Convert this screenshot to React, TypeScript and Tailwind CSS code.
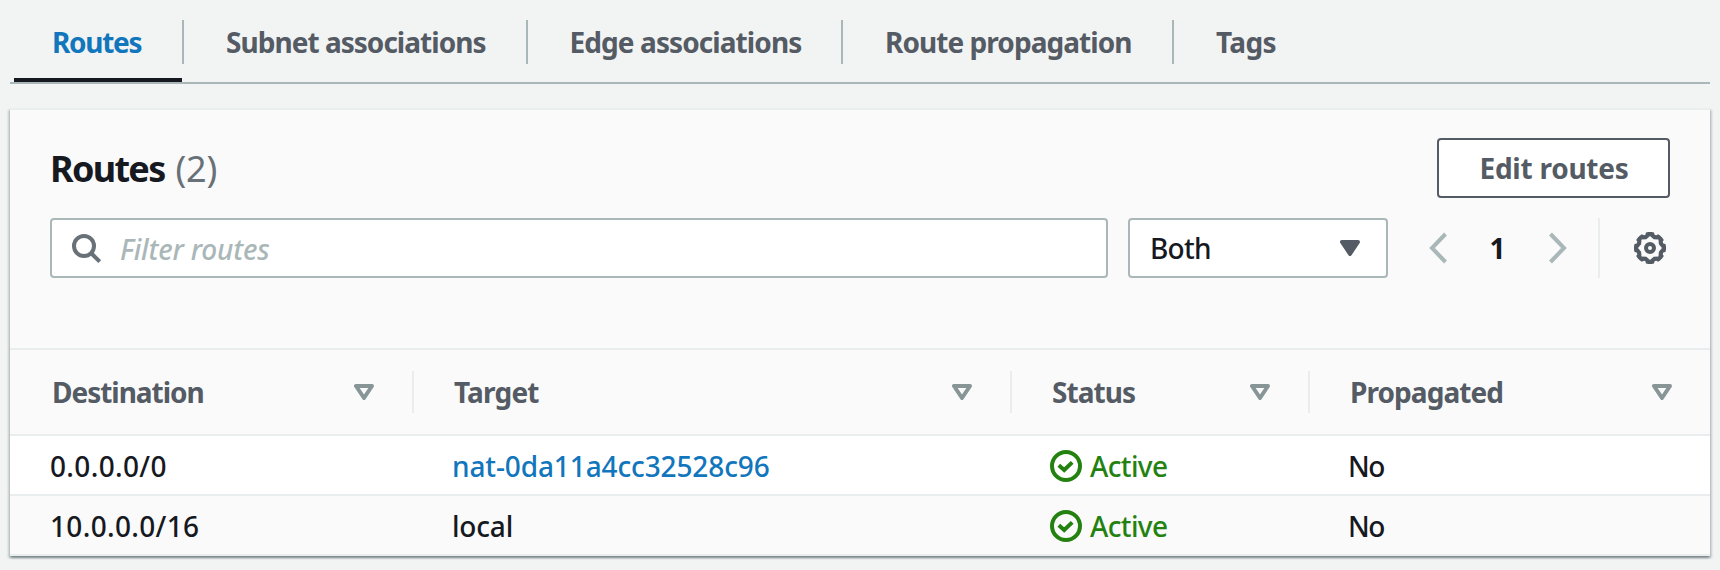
import React from "react";

const tabs = [
  { label: "Routes", box: "w-[168px] pl-[38px]", text: "text-[#1176bc] tracking-[-1.29px]" },
  { label: "Subnet associations", box: "w-[344px] border-r-2 pl-[42px]", text: "text-[#545b64] tracking-[-0.97px]" },
  { label: "Edge associations", box: "w-[315px] border-r-2 pl-[41.5px]", text: "text-[#545b64] tracking-[-0.91px]" },
  { label: "Route propagation", box: "w-[331px] border-r-2 pl-[42px]", text: "text-[#545b64] tracking-[-0.94px]" },
  { label: "Tags", box: "pl-[42px]", text: "text-[#545b64] tracking-[-0.63px]" },
];

const columns = [
  { label: "Destination", cls: "pl-[42px] pr-[38px]", text: "tracking-[-1.02px]" },
  { label: "Target", cls: "pl-10 pr-[38px]", text: "tracking-[-0.8px]" },
  { label: "Status", cls: "pl-10 pr-[38px]", text: "tracking-[-0.94px]" },
  { label: "Propagated", cls: "pl-[40px] pr-[38px]", text: "tracking-[-0.92px]" },
];

const rows = [
  {
    destination: "0.0.0.0/0",
    destCls: "tracking-[0.35px]",
    target: "nat-0da11a4cc32528c96",
    targetCls: "text-[#1176bc] tracking-[-0.12px]",
    bg: "bg-white",
  },
  {
    destination: "10.0.0.0/16",
    destCls: "tracking-[0.33px]",
    target: "local",
    targetCls: "tracking-[-0.2px]",
    bg: "bg-[#fafafa]",
  },
];

const grid = "grid grid-cols-[404px_598px_298px_400px]";

function polar(angle: number, r: number) {
  const a = (angle * Math.PI) / 180;
  return `${(16 + r * Math.cos(a)).toFixed(2)},${(16 + r * Math.sin(a)).toFixed(2)}`;
}

const gearOuter = Array.from({ length: 8 }, (_, i) =>
  [
    polar(i * 45 - 14.5, 16),
    polar(i * 45 - 5, 16.1),
    polar(i * 45 + 5, 16.1),
    polar(i * 45 + 14.5, 16),
    polar(i * 45 + 19, 14.1),
    polar(i * 45 + 26, 14.1),
  ].join("L"),
).join("L");

const gearInner = Array.from({ length: 8 }, (_, i) =>
  [polar(i * 45, 12), polar(i * 45 + 22.5, 9.6)].join("L"),
).join("L");

function GearIcon() {
  return (
    <svg width="32" height="32" viewBox="0 0 32 32">
      <path d={`M${gearOuter}ZM${gearInner}Z`} fill="#545b64" fillRule="evenodd" />
      <circle cx="16" cy="16" r="4" fill="none" stroke="#545b64" strokeWidth="4" />
    </svg>
  );
}

function SearchIcon() {
  return (
    <svg className="mt-0.5" width="30" height="30" viewBox="0 0 30 30" fill="none" stroke="#687078" strokeWidth="4">
      <circle cx="12" cy="12" r="10" />
      <path d="M19 19l8.700 8.700" />
    </svg>
  );
}

function CheckIcon() {
  return (
    <svg width="32" height="32" viewBox="0 0 32 32" fill="none" stroke="#23820f" strokeWidth="4">
      <circle cx="16" cy="16" r="14" />
      <path d="M8.800 15.200l5.400 4.800 8-7.600" />
    </svg>
  );
}

function SortIcon() {
  return (
    <svg width="20" height="16" viewBox="0 0 20 16" fill="none">
      <path d="M2 2h16l-8 12z" stroke="#879596" strokeWidth="4" strokeLinejoin="round" />
    </svg>
  );
}

export default function App() {
  return (
    <div className="flex h-[570px] w-[1720px] flex-col overflow-hidden bg-[#f2f3f3] px-[10px] font-['Noto_Sans',sans-serif] text-[28px] font-medium leading-[42px] text-[#16191f]">
      <div className="flex h-[84px] shrink-0 border-b-2 border-[#aab7b8] pl-1">
        {tabs.map((tab, i) => (
          <React.Fragment key={tab.label}>
            <div className="flex shrink-0 flex-col justify-between">
              <div className={`mt-5 flex h-11 items-center whitespace-nowrap border-[#aab7b8] font-bold ${tab.box}`}>
                <span className={tab.text}>{tab.label}</span>
              </div>
              {i === 0 && <div className="h-1 bg-[#16191f]" />}
            </div>
            {i === 0 && <div className="mt-5 h-11 w-0.5 bg-[#aab7b8]" />}
          </React.Fragment>
        ))}
      </div>

      <div className="mt-6 flex h-[448px] shrink-0 flex-col border-t-2 border-[#eaeded] bg-[#fafafa] shadow-[0_2px_2px_0_rgba(0,28,36,0.3),2px_2px_2px_0_rgba(0,28,36,0.15),-2px_2px_2px_0_rgba(0,28,36,0.15)]">
        <div className="flex h-[238px] flex-col px-10 pt-7">
          <div className="flex h-[60px] items-center justify-between">
            <h2 className="flex pt-0.5 text-[36px] leading-[54px]">
              <span className="font-bold tracking-[-1.7px]">Routes</span>
              <span className="ml-[11px] font-normal tracking-[-0.2px] text-[#687078]">(2)</span>
            </h2>
            <button className="flex h-[60px] w-[233px] items-center justify-center rounded-[4px] border-2 border-[#545b64] bg-white pl-px font-bold tracking-[-0.24px] text-[#545b64]">
              Edit routes
            </button>
          </div>
          <div className="mt-5 flex h-[60px] items-center">
            <div className="flex h-[60px] w-[1058px] items-center rounded-[4px] border-2 border-[#aab7b8] bg-white pl-5">
              <SearchIcon />
              <span className="ml-[18px] pt-0.5 italic tracking-[-0.18px] text-[#aab7b8]">Filter routes</span>
            </div>
            <div className="ml-5 flex h-[60px] w-[260px] items-center justify-between rounded-[4px] border-2 border-[#aab7b8] bg-white pl-5 pr-[26px]">
              <span className="tracking-[-0.7px]">Both</span>
              <svg width="20" height="16" viewBox="0 0 20 16">
                <path d="M2 2h16l-8 12z" fill="#545b64" stroke="#545b64" strokeWidth="4" strokeLinejoin="round" />
              </svg>
            </div>
            <svg className="ml-[41px]" width="18" height="32" viewBox="0 0 18 32" fill="none" stroke="#aab7b8" strokeWidth="4">
              <path d="M16.500 2L3 16l13.500 14" />
            </svg>
            <span className="w-[102px] pr-px text-center font-bold">1</span>
            <svg width="18" height="32" viewBox="0 0 18 32" fill="none" stroke="#aab7b8" strokeWidth="4">
              <path d="M1.500 2L15 16 1.500 30" />
            </svg>
            <div className="ml-[31px] h-[60px] w-0.5 bg-[#eaeded]" />
            <div className="ml-[34px]">
              <GearIcon />
            </div>
          </div>
        </div>

        <div className={`${grid} h-[88px] border-y-2 border-[#eaeded] font-bold text-[#545b64]`}>
          {columns.map((c, i) => (
            <div
              key={c.label}
              className={`my-[21px] flex h-[42px] items-center justify-between ${c.cls} ${i < 3 ? "border-r-2 border-[#eaeded]" : ""}`}
            >
              <span className={c.text}>{c.label}</span>
              <SortIcon />
            </div>
          ))}
        </div>
        {rows.map((r) => (
          <div key={r.destination} className={`${grid} h-[60px] items-center border-b-2 border-[#eaeded] pt-0.5 ${r.bg}`}>
            <span className={`pl-10 ${r.destCls}`}>{r.destination}</span>
            <span className={`pl-[38px] ${r.targetCls}`}>{r.target}</span>
            <span className="flex items-center gap-2 pl-[38px] tracking-[-0.63px] text-[#23820f]">
              <CheckIcon />
              Active
            </span>
            <span className="pl-[38px] tracking-[-1.4px]">No</span>
          </div>
        ))}
      </div>
    </div>
  );
}
